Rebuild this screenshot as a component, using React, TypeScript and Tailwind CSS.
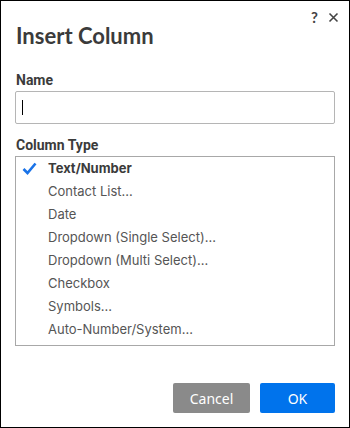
import React from "react";

const items = [
  "Text/Number",
  "Contact List...",
  "Date",
  "Dropdown (Single Select)...",
  "Dropdown (Multi Select)...",
  "Checkbox",
  "Symbols...",
  "Auto-Number/System...",
];

export default function App() {
  return (
    <div className="w-[350px] h-[428px] border border-black bg-white flex flex-col relative" style={{ fontFamily: "Inter, 'Noto Sans', sans-serif" }}>
      <div className="absolute top-[5px] right-[10px] flex items-center gap-[10px] text-[#444]">
        <span className="text-[15px] font-bold" style={{ fontFamily: "Lato, sans-serif" }}>?</span>
        <svg width="11" height="11" viewBox="0 0 11 11"><path d="M1.5 1.5 L9.5 9.5 M9.5 1.5 L1.5 9.5" stroke="#444" strokeWidth="1.6" /></svg>
      </div>
      <div className="pl-[15px] pt-[22px] text-[22px] font-bold text-[#3b3b3b] leading-[26px]" style={{ fontFamily: "Lato, sans-serif" }}>Insert Column</div>
      <div className="pl-[15px] mt-[23px] text-[14px] font-bold text-[#3b3b3b] leading-[16px]" style={{ fontFamily: "Roboto, sans-serif" }}>Name</div>
      <div className="mx-[14px] mt-[3px] h-[33px] border border-[#b5b5b5] rounded-[2px] flex items-center pl-[6px]">
        <div className="w-px h-[15px] bg-black"></div>
      </div>
      <div className="pl-[15px] mt-[13px] text-[14px] font-bold text-[#3b3b3b] leading-[16px]" style={{ fontFamily: "Roboto, sans-serif" }}>Column Type</div>
      <div className="mx-[14px] mt-[3px] h-[190px] border border-[#a8a8a8]">
        {items.map((t, i) => (
          <div key={t} className="h-[23px] flex items-center relative pl-[32px] text-[13px] text-[#555]">
            {i === 0 && (
              <svg className="absolute left-[6px] top-[5px]" width="15" height="13" viewBox="0 0 15 13"><path d="M1.5 7 L5.5 11 L13.5 1.5" fill="none" stroke="#1a73e8" strokeWidth="2.6" /></svg>
            )}
            <span className={i === 0 ? "font-bold text-[#3b3b3b]" : ""}>{t}</span>
          </div>
        ))}
      </div>
      <div className="flex-1"></div>
      <div className="flex justify-end gap-[10px] pr-[14px] pb-[14px]">
        <button className="w-[77px] h-[30px] rounded-[2px] bg-[#8a8a8a] text-white text-[14px]" style={{ fontFamily: "'Noto Sans', sans-serif" }}>Cancel</button>
        <button className="w-[75px] h-[30px] rounded-[2px] bg-[#0073ec] text-white text-[14px]" style={{ fontFamily: "'Noto Sans', sans-serif" }}>OK</button>
      </div>
    </div>
  );
}
